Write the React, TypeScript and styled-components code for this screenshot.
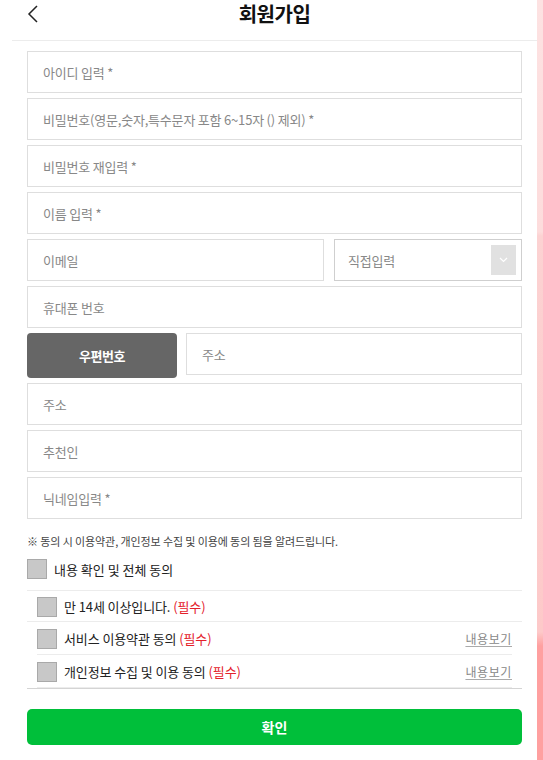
import React from "react";
import styled, { createGlobalStyle } from "styled-components";

const GlobalStyle = createGlobalStyle`
  * { box-sizing: border-box; }
  body {
    margin: 0;
    background: #fff;
    font-family: "Noto Sans CJK KR", "Noto Sans", sans-serif;
    color: #222;
  }
`;

const Page = styled.div`
  display: flex;
  min-height: 760px;
`;

const Main = styled.div`
  width: 525px;
  margin-left: 12px;
  background: #fff;
`;

const SideStrip = styled.div`
  flex: 1;
  background: linear-gradient(
    180deg,
    #fde2e2 0px,
    #fddcdc 232px,
    #fcd2d2 236px,
    #fdc9c9 632px,
    #ffa0a0 646px,
    #ffa0a0 100%
  );
`;

const Header = styled.header`
  display: grid;
  grid-template-columns: 40px 1fr 40px;
  align-items: start;
  height: 41px;
  border-bottom: 1px solid #ececec;
`;

const BackButton = styled.button`
  display: flex;
  align-items: center;
  justify-content: center;
  width: 30px;
  height: 28px;
  margin-left: 6px;
  padding: 0;
  border: 0;
  background: none;
  cursor: pointer;
`;

const Title = styled.h1`
  margin: 0;
  line-height: 28px;
  text-align: center;
  font-size: 20px;
  font-weight: 700;
  color: #111;
  letter-spacing: -0.5px;
`;

const Form = styled.form`
  display: flex;
  flex-direction: column;
  gap: 5px;
  padding: 10px 15px 0;
`;

const Input = styled.input`
  display: block;
  width: 100%;
  height: 42px;
  padding: 0 15px;
  border: 1px solid #dedede;
  background: #fff;
  font-family: inherit;
  font-size: 13px;
  letter-spacing: -0.2px;
  color: #333;
  outline: none;
  &::placeholder {
    color: #888;
  }
`;

const EmailRow = styled.div`
  display: grid;
  grid-template-columns: 1fr 188px;
  gap: 10px;
`;

const SelectBox = styled.div`
  display: flex;
  align-items: center;
  justify-content: space-between;
  height: 42px;
  padding: 0 5px 0 13px;
  border: 1px solid #cfcfcf;
  font-size: 13px;
  letter-spacing: -0.2px;
  color: #888;
`;

const ArrowBox = styled.span`
  display: flex;
  align-items: center;
  justify-content: center;
  width: 25px;
  height: 30px;
  background: #e1e1e1;
`;

const ZipRow = styled.div`
  display: grid;
  grid-template-columns: 150px 1fr;
  align-items: start;
  gap: 9px;
`;

const ZipButton = styled.button`
  height: 45px;
  border: 0;
  border-radius: 4px;
  background: #666;
  color: #fff;
  font-family: inherit;
  font-size: 13px;
  font-weight: 700;
  letter-spacing: -0.4px;
  cursor: pointer;
`;

const Notice = styled.p`
  margin: 9px 0 0;
  line-height: 16px;
  font-size: 11px;
  letter-spacing: -0.1px;
  color: #444;
`;

const AgreeSection = styled.div``;

const AllAgree = styled.label`
  display: flex;
  align-items: center;
  gap: 7px;
  height: 37px;
  padding-bottom: 6px;
  border-bottom: 1px solid #ececec;
  font-size: 13px;
  color: #222;
`;

const Check = styled.span`
  display: inline-block;
  flex: none;
  width: 20px;
  height: 20px;
  background: #c8c8c8;
  border: 1px solid #a9a9a9;
`;

const TermsList = styled.ul`
  list-style: none;
  margin: 0;
  padding: 0;
  border-bottom: 1px solid #d4d4d4;
`;

const TermsItem = styled.li<{ $inset?: boolean; $first?: boolean }>`
  display: flex;
  align-items: center;
  gap: 7px;
  height: ${(p) => (p.$first ? "31px" : "33px")};
  padding: 0 10px;
  font-size: 13px;
  letter-spacing: -0.1px;
  color: #222;
  background-image: linear-gradient(#ececec, #ececec);
  background-repeat: no-repeat;
  background-position: ${(p) => (p.$inset ? "10px 100%" : "0 100%")};
  background-size: ${(p) => (p.$inset ? "calc(100% - 20px) 1px" : "100% 1px")};
`;

const Required = styled.span`
  color: #e4202a;
`;

const ViewLink = styled.a`
  margin-left: auto;
  font-size: 12px;
  letter-spacing: 0.6px;
  color: #888;
  text-decoration: underline;
  text-decoration-color: #aaa;
  text-underline-offset: 2px;
  cursor: pointer;
`;

const Submit = styled.button`
  height: 36px;
  margin-top: 15px;
  border: 0;
  border-radius: 5px;
  background: #00bf3a;
  color: #fff;
  font-family: inherit;
  font-size: 14px;
  font-weight: 700;
  cursor: pointer;
`;

const terms = [
  { text: "만 14세 이상입니다.", link: false },
  { text: "서비스 이용약관 동의", link: true },
  { text: "개인정보 수집 및 이용 동의", link: true },
];

const App = () => {
  return (
    <>
      <GlobalStyle />
      <Page>
        <Main>
          <Header>
            <BackButton type="button" aria-label="뒤로">
              <svg width="12" height="18" viewBox="0 0 12 18" fill="none">
                <path d="M10 1 L2 9 L10 17" stroke="#222" strokeWidth="1.5" />
              </svg>
            </BackButton>
            <Title>회원가입</Title>
            <span />
          </Header>

          <Form onSubmit={(e) => e.preventDefault()}>
            <Input placeholder="아이디 입력 *" />
            <Input type="password" placeholder="비밀번호(영문,숫자,특수문자 포함 6~15자 () 제외) *" />
            <Input type="password" placeholder="비밀번호 재입력 *" />
            <Input placeholder="이름 입력 *" />
            <EmailRow>
              <Input placeholder="이메일" />
              <SelectBox>
                직접입력
                <ArrowBox>
                  <svg width="9" height="6" viewBox="0 0 9 6" fill="none">
                    <path d="M1 1 L4.5 4.5 L8 1" stroke="#fff" strokeWidth="1.2" />
                  </svg>
                </ArrowBox>
              </SelectBox>
            </EmailRow>
            <Input placeholder="휴대폰 번호" />
            <ZipRow>
              <ZipButton type="button">우편번호</ZipButton>
              <Input placeholder="주소" />
            </ZipRow>
            <Input placeholder="주소" />
            <Input placeholder="추천인" />
            <Input placeholder="닉네임입력 *" />

            <Notice>※ 동의 시 이용약관, 개인정보 수집 및 이용에 동의 됨을 알려드립니다.</Notice>
            <AgreeSection>
              <AllAgree>
                <Check />
                내용 확인 및 전체 동의
              </AllAgree>
              <TermsList>
                {terms.map((t, i) => (
                  <TermsItem key={t.text} $inset={i > 0} $first={i === 0}>
                    <Check />
                    <span>
                      {t.text} <Required>(필수)</Required>
                    </span>
                    {t.link && <ViewLink>내용보기</ViewLink>}
                  </TermsItem>
                ))}
              </TermsList>
            </AgreeSection>
            <Submit type="submit">확인</Submit>
          </Form>
        </Main>
        <SideStrip />
      </Page>
    </>
  );
};

export default App;
